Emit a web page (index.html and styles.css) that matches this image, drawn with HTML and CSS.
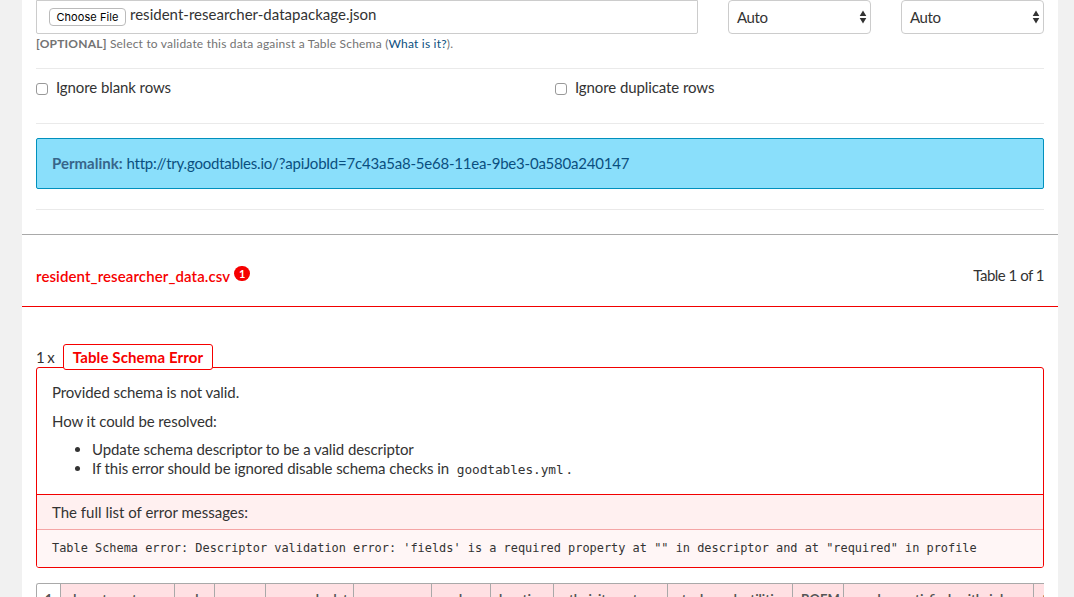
FILE: index.html
```html
<!DOCTYPE html>
<html lang="en">
<head>
<meta charset="utf-8">
<title>Goodtables report</title>
<link rel="stylesheet" href="styles.css">
</head>
<body>
<main class="page">
  <form class="options">
    <div class="sources">
      <div class="schema">
        <div class="file"><button class="choose" type="button">Choose File</button><span class="filename">resident-researcher-datapackage.json</span></div>
        <small class="help"><strong>[OPTIONAL]</strong> Select to validate this data against a Table Schema (<a>What is it?</a>).</small>
      </div>
      <div class="select"><span>Auto</span><svg width="8" height="14" viewBox="0 0 8 14"><path d="M4 .5L7.3 6H.7zM.7 8h6.6L4 13.5z"/></svg></div>
      <div class="select"><span>Auto</span><svg width="8" height="14" viewBox="0 0 8 14"><path d="M4 .5L7.3 6H.7zM.7 8h6.6L4 13.5z"/></svg></div>
    </div>
    <div class="checks">
      <label class="check"><i class="box"></i><span>Ignore blank rows</span></label>
      <label class="check"><i class="box"></i><span>Ignore duplicate rows</span></label>
    </div>
    <div class="permalink"><strong>Permalink:</strong> <a class="url">http://try.goodtables.io/?apiJobId=7c43a5a8-5e68-11ea-9be3-0a580a240147</a></div>
  </form>
  <section class="report">
    <header class="report-head">
      <h3 class="source"><span class="csv">resident_researcher_data.csv</span><span class="badge">1</span></h3>
      <span class="count">Table 1 of 1</span>
    </header>
    <div class="error-title"><span class="times">1 x</span><span class="error-name">Table Schema Error</span></div>
    <div class="error">
      <div class="description">
        <p>Provided schema is not valid.</p>
        <p>How it could be resolved:</p>
        <ul>
          <li>Update schema descriptor to be a valid descriptor</li>
          <li>If this error should be ignored disable schema checks in <code>goodtables.yml</code>.</li>
        </ul>
      </div>
      <div class="full-list">The full list of error messages:</div>
      <div class="message">Table Schema error: Descriptor validation error: 'fields' is a required property at "" in descriptor and at "required" in profile</div>
    </div>
    <div class="data">
      <span class="row-number">1</span><span>department</span><span>role</span><span>years</span><span>research_dat</span><span>answers</span><span>under</span><span>location</span><span>ethnicity_extra</span><span>stu_bound_utilities</span><span>BOEM</span><span>number_satisfied_with_job</span><span>t</span>
    </div>
  </section>
</main>
</body>
</html>
```
FILE: styles.css
```css
* { box-sizing: border-box; }
body {
  margin: 0;
  height: 597px;
  overflow: hidden;
  background: #f1f1f1;
  color: #333;
  font: 15px/20px Lato, "Open Sans", sans-serif;
}
.page { width: 1036px; height: 597px; margin-left: 22px; background: #fff; overflow: hidden; }
.options { height: 234px; padding: 0 14px; }
.sources { display: flex; height: 69px; border-bottom: 1px solid #eaeaea; }
.schema { width: 662px; margin-right: 30px; }
.file {
  height: 34px;
  display: flex;
  align-items: flex-start;
  border: 1px solid #ccc;
  border-radius: 0 0 2px 2px;
  padding: 7px 12px;
}
.choose {
  width: 77px;
  height: 18px;
  padding: 0;
  border: 1px solid #bbb;
  border-radius: 4px;
  background: #fff;
  color: #000;
  font: 11px/16px Inter, sans-serif;
  letter-spacing: .08px;
}
.filename { margin: -4px 0 0 4px; letter-spacing: .02px; white-space: nowrap; }
.help { display: block; font-size: 12px; line-height: 20px; color: #737373; letter-spacing: .2px; }
a { color: #0a4f80; }
.select {
  width: 143px;
  height: 34px;
  display: flex;
  justify-content: space-between;
  align-items: center;
  padding: 0 3px 0 8px;
  border: 1px solid #ccc;
  border-radius: 4px;
  letter-spacing: -.4px;
}
.select + .select { margin-left: 30px; }
.select svg { fill: #333; }
.checks { display: flex; height: 55px; padding-top: 9px; border-bottom: 1px solid #eaeaea; }
.check { flex: 0 0 519px; height: 20px; display: flex; align-items: center; gap: 8px; white-space: nowrap; letter-spacing: -.09px; }
.check span { line-height: 20px; padding-bottom: 2px; }
.box { width: 12px; height: 12px; margin-top: 1px; border: 1px solid #999; border-radius: 3px; }
.permalink {
  height: 51px;
  margin-top: 14px;
  padding: 14px 15px;
  border: 1px solid #0090bd;
  border-radius: 2px;
  background: #8adffb;
  color: #37658a;
}
.url { letter-spacing: -.21px; }
.options::after { content: ""; display: block; margin-top: 20px; border-bottom: 1px solid #eaeaea; }
.report-head {
  height: 73px;
  padding: 9px 14px 0;
  display: flex;
  justify-content: space-between;
  align-items: center;
  border-top: 1px solid #a9a9a9;
  border-bottom: 1px solid #f20000;
}
.source { display: flex; margin: 0; padding-top: 2px; color: #f60000; font: 600 15px/20px Lato, sans-serif; }
.csv { letter-spacing: .11px; }
.badge {
  width: 16px;
  height: 15px;
  margin: 0 0 0 4px;
  border-radius: 8px;
  background: #f60000;
  color: #fff;
  text-align: center;
  font: bold 11px/15px Lato, sans-serif;
}
.count { letter-spacing: -.5px; }
.error-title { display: flex; height: 26px; margin: 37px 14px 0; position: relative; }
.times { width: 27px; padding-top: 3px; letter-spacing: -.6px; }
.error-name {
  width: 150px;
  height: 26px;
  border: 1px solid #f60000;
  border-radius: 3px;
  background: #fff;
  color: #f60000;
  font-weight: bold;
  line-height: 24px;
  text-align: center;
  letter-spacing: .12px;
}
.error { height: 201px; margin: -3px 14px 0; border: 1px solid #f20000; border-radius: 3px; overflow: hidden; }
.description { height: 126px; padding: 14px 15px 0; letter-spacing: -.08px; }
.description p { margin: 0 0 9px; }
ul { margin: 0; padding-left: 40px; line-height: 19px; }
code, .message { font-family: "DejaVu Sans Mono", monospace; font-size: 11.91px; }
code { padding: 0 4px; font-size: 12.8px; line-height: 1; }
.full-list { height: 36px; padding: 7px 15px; border-top: 1px solid #f20000; border-bottom: 1px solid #f5a5a5; background: #fff0f0; }
.message { height: 37px; padding: 8px 15px; background: #fff6f6; white-space: pre; }
.data {
  width: 1008px;
  height: 40px;
  margin: 15px 14px 0;
  display: grid;
  grid-template-columns: 24px 114px 40px 51px 88px 78px 59px 63px 114px 125px 51px 190px 11px;
  border: 1px solid #a9a9a9;
  border-right: 0;
  border-radius: 3px 0 0;
  overflow: hidden;
}
.data span { padding: 5px 0 0 8px; border-right: 1px solid #a9a9a9; background: #ffe0e3; font-size: 13px; font-weight: bold; color: #555; white-space: nowrap; overflow: hidden; }
.data .row-number { background: #fff; }
.data span:last-child { border-right: 0; }
```
